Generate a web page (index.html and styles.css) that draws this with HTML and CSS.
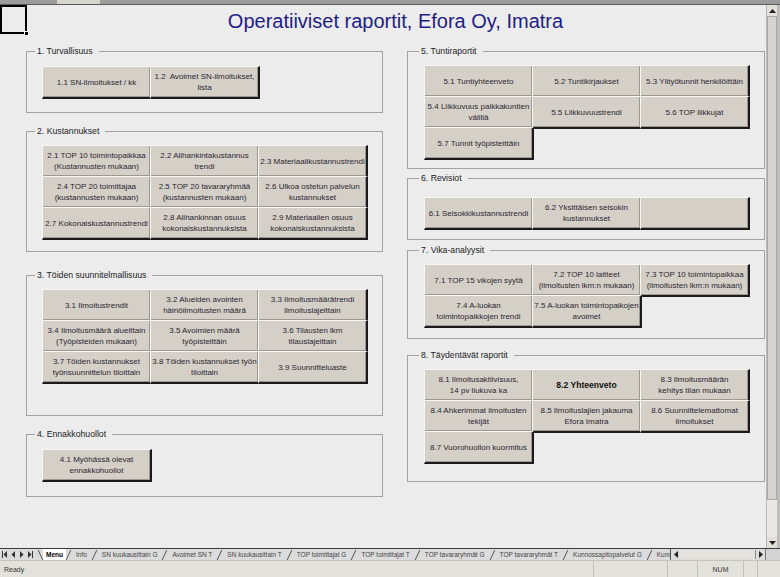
FILE: index.html
```html
<!DOCTYPE html>
<html lang="fi">
<head>
<meta charset="utf-8">
<title>Operatiiviset raportit</title>
<link rel="stylesheet" href="styles.css">
</head>
<body>
<div class="app">
  <div class="topstrip"><span class="toptab"></span></div>
  <div class="workspace">
    <div class="sheet">
      <div class="cellsel"><span class="handle"></span></div>
      <h1 class="title">Operatiiviset raportit, Efora Oy, Imatra</h1>
      <div class="cols">
        <div class="col col-l">
          <fieldset class="grp g1">
            <legend>1. Turvallisuus</legend>
            <div class="btns">
              <div class="btn">1.1 SN-ilmoitukset / kk</div>
              <div class="btn">1.2&nbsp; Avoimet SN-ilmoitukset,<br>lista</div>
            </div>
          </fieldset>
          <fieldset class="grp g2">
            <legend>2. Kustannukset</legend>
            <div class="btns">
              <div class="btn">2.1 TOP 10 toimintopaikkaa<br>(Kustannusten mukaan)</div>
              <div class="btn">2.2 Alihankintakustannus<br>trendi</div>
              <div class="btn">2.3 Materiaalikustannustrendi</div>
              <div class="btn">2.4 TOP 20 toimittajaa<br>(kustannusten mukaan)</div>
              <div class="btn">2.5 TOP 20 tavararyhmää<br>(kustannusten mukaan)</div>
              <div class="btn">2.6 Ulkoa ostetun palvelun<br>kustannukset</div>
              <div class="btn">2.7 Kokonaiskustannustrendi</div>
              <div class="btn">2.8 Alihankinnan osuus<br>kokonaiskustannuksista</div>
              <div class="btn">2.9 Materiaalien osuus<br>kokonaiskustannuksista</div>
            </div>
          </fieldset>
          <fieldset class="grp g3">
            <legend>3. Töiden suunnitelmallisuus</legend>
            <div class="btns">
              <div class="btn">3.1 Ilmoitustrendit</div>
              <div class="btn">3.2 Alueiden avointen<br>häiriöilmoitusten määrä</div>
              <div class="btn">3.3 Ilmoitusmäärätrendi<br>ilmoituslajeittain</div>
              <div class="btn">3.4 Ilmoitusmäärä alueittain<br>(Työpisteiden mukaan)</div>
              <div class="btn">3.5 Avoimien määrä<br>työpisteittäin</div>
              <div class="btn">3.6 Tilausten lkm<br>tilauslajeittain</div>
              <div class="btn">3.7 Töiden kustannukset<br>työnsuunnittelun tiloittain</div>
              <div class="btn">3.8 Töiden kustannukset työn<br>tiloittain</div>
              <div class="btn">3.9 Suunnitteluaste</div>
            </div>
          </fieldset>
          <fieldset class="grp g4">
            <legend>4. Ennakkohuollot</legend>
            <div class="btns">
              <div class="btn">4.1 Myöhässä olevat<br>ennakkohuollot</div>
            </div>
          </fieldset>
        </div>
        <div class="col col-r">
          <fieldset class="grp g5">
            <legend>5. Tuntiraportit</legend>
            <div class="btns">
              <div class="btn">5.1 Tuntiyhteenveto</div>
              <div class="btn">5.2 Tuntikirjaukset</div>
              <div class="btn">5.3 Ylityötunnit henkilöittäin</div>
              <div class="btn">5.4 Liikkuvuus paikkakuntien<br>välillä</div>
              <div class="btn">5.5 Liikkuvuustrendi</div>
              <div class="btn">5.6 TOP liikkujat</div>
              <div class="btn">5.7 Tunnit työpisteittäin</div>
            </div>
          </fieldset>
          <fieldset class="grp g6">
            <legend>6. Revisiot</legend>
            <div class="btns">
              <div class="btn">6.1 Seisokkikustannustrendi</div>
              <div class="btn">6.2 Yksittäisen seisokin<br>kustannukset</div>
              <div class="btn"></div>
            </div>
          </fieldset>
          <fieldset class="grp g7">
            <legend>7. Vika-analyysit</legend>
            <div class="btns">
              <div class="btn">7.1 TOP 15 vikojen syytä</div>
              <div class="btn">7.2 TOP 10 laitteet<br>(ilmoitusten lkm:n mukaan)</div>
              <div class="btn">7.3 TOP 10 toimintopaikkaa<br>(ilmoitusten lkm:n mukaan)</div>
              <div class="btn">7.4 A-luokan<br>toimintopaikkojen trendi</div>
              <div class="btn">7.5 A-luokan toimintopaikojen<br>avoimet</div>
            </div>
          </fieldset>
          <fieldset class="grp g8">
            <legend>8. Täydentävät raportit</legend>
            <div class="btns">
              <div class="btn">8.1 Ilmoitusaktiivisuus,<br>14 pv liukuva ka</div>
              <div class="btn bold">8.2 Yhteenveto</div>
              <div class="btn">8.3 Ilmoitusmäärän<br>kehitys tilan mukaan</div>
              <div class="btn">8.4 Ahkerimmat ilmoitusten<br>tekijät</div>
              <div class="btn">8.5 Ilmoituslajien jakauma<br>Efora Imatra</div>
              <div class="btn">8.6 Suunnittelemattomat<br>ilmoitukset</div>
              <div class="btn">8.7 Vuorohuollon kuormitus</div>
            </div>
          </fieldset>
        </div>
      </div>
    </div>
    <div class="vscroll">
      <div class="arrow"><svg width="7" height="4" viewBox="0 0 7 4"><path d="M3.5 0 L7 4 L0 4 Z" fill="#222"/></svg></div>
      <div class="thumb"></div>
      <div class="track"></div>
      <div class="arrow"><svg width="7" height="4" viewBox="0 0 7 4"><path d="M0 0 L7 0 L3.5 4 Z" fill="#222"/></svg></div>
    </div>
    <div class="rightedge"></div>
  </div>
  <div class="tabbar">
    <div class="nav">
      <svg width="36" height="9" viewBox="0 0 36 9">
        <rect x="2" y="1" width="1" height="7" fill="#333"/>
        <path d="M7 1 L7 8 L3.5 4.5 Z" fill="#333"/>
        <path d="M15 1 L15 8 L11.5 4.5 Z" fill="#333"/>
        <path d="M20 1 L20 8 L23.5 4.5 Z" fill="#333"/>
        <path d="M28 1 L28 8 L31.5 4.5 Z" fill="#333"/>
        <rect x="32" y="1" width="1" height="7" fill="#333"/>
      </svg>
    </div>
    <div class="tabs">
      <span class="sep back"></span><span class="tab active">Menu</span><span class="sep"></span><span class="tab">Info</span><span class="sep"></span><span class="tab">SN kuukausittain G</span><span class="sep"></span><span class="tab">Avoimet SN T</span><span class="sep"></span><span class="tab">SN kuukausittain T</span><span class="sep"></span><span class="tab">TOP toimittajat G</span><span class="sep"></span><span class="tab">TOP toimittajat T</span><span class="sep"></span><span class="tab">TOP tavararyhmät G</span><span class="sep"></span><span class="tab">TOP tavararyhmät T</span><span class="sep"></span><span class="tab">Kunnossapitopalvelut G</span><span class="sep"></span><span class="tab">Kunnossapitopalvelut T</span>
    </div>
    <div class="hscroll">
      <div class="harrow"><svg width="4" height="7" viewBox="0 0 4 7"><path d="M4 0 L4 7 L0 3.5 Z" fill="#222"/></svg></div>
      <div class="hthumb"></div>
      <div class="harrow"><svg width="4" height="7" viewBox="0 0 4 7"><path d="M0 0 L0 7 L4 3.5 Z" fill="#222"/></svg></div>
    </div>
    <div class="corner"></div>
  </div>
  <div class="statusbar">
    <div class="panel first">Ready</div>
    <div class="panel p1"></div>
    <div class="panel p2"></div>
    <div class="panel p3">NUM</div>
    <div class="panel p4"></div>
    <div class="panel p5"></div>
  </div>
</div>
</body>
</html>
```

FILE: styles.css
```css
* { box-sizing: border-box; }
html, body { margin: 0; padding: 0; }
body {
  width: 780px;
  height: 577px;
  overflow: hidden;
  background: #ececec;
  font-family: "Liberation Sans", Arial, sans-serif;
}
.app { display: flex; flex-direction: column; height: 577px; }

.topstrip {
  height: 5px;
  background: #9c9c9c;
  border-bottom: 1px solid #5c5c5c;
  display: flex;
  padding-left: 57px;
}
.toptab { width: 43px; background: #d8d5ce; }

.workspace { display: flex; height: 543px; }
.sheet {
  position: relative;
  width: 766px;
  background: #ececec;
  padding: 4px 0 0 26px;
}
.cellsel {
  position: absolute;
  left: 0;
  top: 0;
  width: 27px;
  height: 29px;
  border: 2px solid #000;
}
.handle {
  position: absolute;
  right: -4px;
  bottom: -4px;
  width: 5px;
  height: 5px;
  background: #000;
  border: 1px solid #fff;
}
.title {
  margin: 0;
  width: 739px;
  text-align: center;
  font-weight: normal;
  font-size: 20px;
  line-height: 24px;
  color: #1e2184;
}
.cols {
  display: grid;
  grid-template-columns: 357px 358px;
  column-gap: 24px;
  margin-top: 13px;
  align-items: start;
}
.col { display: flex; flex-direction: column; }

.grp {
  margin: 0;
  padding: 0 0 0 15px;
  border: 1px solid #a2a2a2;
  min-width: 0;
}
.grp legend {
  font-size: 8.7px;
  line-height: 11px;
  color: #1c1c1c;
  padding: 0 6px 0 2px;
  margin-left: -7px;
}
.col-r .grp { padding-left: 16px; }
.col-r .grp legend { margin-left: -5px; }

.g1 { height: 67px; }
.g2 { margin-top: 13px; height: 126px; }
.g3 { margin-top: 18px; height: 146px; }
.g4 { margin-top: 13px; height: 68px; }
.g5 { height: 123px; }
.g6 { margin-top: 4px; height: 67px; }
.g7 { margin-top: 5px; height: 94px; }
.g8 { margin-top: 11px; height: 132px; }

.btns {
  display: grid;
  grid-template-columns: repeat(3, 108px);
  grid-auto-rows: 31px;
  margin-top: 8px;
}
.g1 .btns, .g4 .btns { margin-top: 9px; }
.g6 .btns { margin-top: 13px; }

.btn {
  margin: 0 -2px -2px 0;
  background: #d4d0c8;
  border-style: solid;
  border-width: 1px 2px 2px 1px;
  border-color: #f7f6f3 #1a1a1a #1a1a1a #f7f6f3;
  box-shadow: inset -1px -1px 0 #9c988f;
  display: flex;
  align-items: center;
  justify-content: center;
  text-align: center;
  font-size: 8px;
  line-height: 11px;
  color: #2c2630;
  white-space: nowrap;
}
.btn.bold { font-weight: bold; font-size: 8.6px; color: #111; }

.vscroll {
  width: 11px;
  display: flex;
  flex-direction: column;
  background: #e9e8e4;
  border-left: 1px solid #b8b8b8;
}
.arrow {
  height: 11px;
  flex: 0 0 11px;
  display: flex;
  align-items: center;
  justify-content: center;
  background: #e2e0da;
}
.thumb {
  flex: 0 0 484px;
  background: #d6d4ce;
  border: 1px solid #aaa9a4;
}
.track { flex: 1; }
.rightedge { width: 3px; background: #bdbdbd; }

.tabbar {
  height: 12px;
  display: flex;
  align-items: stretch;
  background: #dcdcdc;
  border-top: 1px solid #3c3c3c;
  font-size: 6.5px;
  color: #444;
}
.nav { width: 38px; display: flex; align-items: center; }
.tabs {
  width: 632px;
  overflow: hidden;
  white-space: nowrap;
  display: flex;
  align-items: center;
}
.tab { padding: 0 5px; line-height: 11px; }
.tab.active { background: #fff; color: #000; font-weight: bold; padding: 0 3px; }
.sep {
  flex: 0 0 1px;
  width: 1px;
  height: 10px;
  background: #555;
  transform: skewX(-25deg);
  margin: 0 2px;
}
.sep.back { transform: skewX(25deg); }
.hscroll {
  width: 95px;
  display: flex;
  align-items: center;
  border-left: 1px solid #555;
}
.harrow { width: 9px; display: flex; justify-content: center; }
.hthumb {
  flex: 1;
  height: 9px;
  background: #e4e2dd;
  border-right: 1px solid #888;
}
.corner { flex: 1; background: #d4d4d4; border-left: 1px solid #777; }

.statusbar {
  flex: 1;
  display: flex;
  background: #e3e1db;
  border-top: 1px solid #c4c2bc;
  font-size: 7px;
  color: #333;
}
.panel { border-left: 1px solid #c2c0ba; display: flex; align-items: center; justify-content: center; }
.panel.first { flex: 1; border-left: none; justify-content: flex-start; padding-left: 4px; }
.p1 { width: 74px; }
.p2 { width: 30px; }
.p3 { width: 46px; }
.p4 { width: 14px; }
.p5 { width: 23px; }
```
